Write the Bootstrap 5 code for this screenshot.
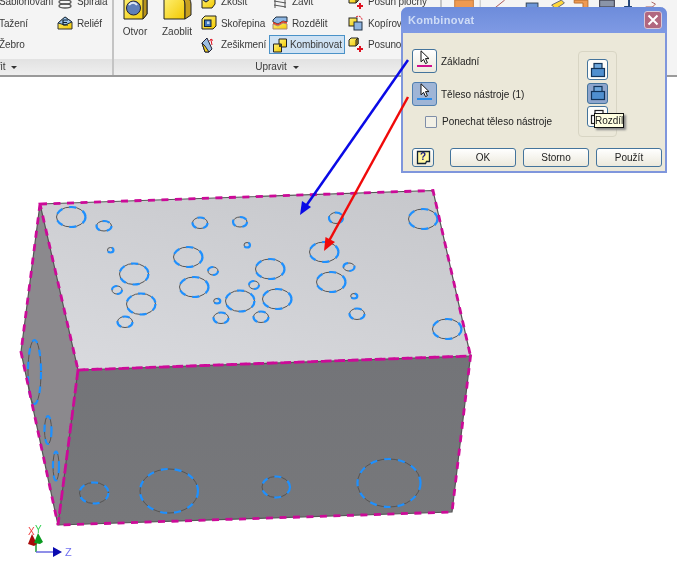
<!DOCTYPE html>
<html lang="cs">
<head>
  <meta charset="UTF-8">
  <meta name="viewport" content="width=device-width, initial-scale=1.0">
  <title>Kombinovat</title>
  <link href="https://cdn.jsdelivr.net/npm/bootstrap@5.3.0/dist/css/bootstrap.min.css" rel="stylesheet">
  <style>
    body {
      width: 677px;
      height: 566px;
      overflow: hidden;
      background: #fff;
      position: relative;
      font-family: "Liberation Sans", Arial, sans-serif;
      font-size: 10px;
      color: #3a3a3a;
    }
    /* ribbon */
    .ribbon {
      height: 77px;
      overflow: hidden;
      border-bottom: 2px solid #9a9a9a;
      background: #f4f4f4;
      filter: blur(.45px);
    }
    .rb-group { height: 75px; flex: none; border-right: 2px solid #c4c4c4; }
    .rb-body { height: 59px; }
    .rb-label {
      height: 16px;
      line-height: 15px;
      text-align: center;
      background: linear-gradient(#e2e2e2, #efefef);
    }
    .rb-caret {
      display: inline-block;
      margin-left: 6px;
      border: 3.5px solid transparent;
      border-top-color: #333;
      border-bottom: 0;
      vertical-align: 1px;
    }
    .rb-col { margin-top: -9px; }
    .rb-item { height: 21.5px; white-space: nowrap; gap: 4px; letter-spacing: -.1px; }
    .rb-pad { padding-left: 3px; }
    .rb-on {
      height: 19px;
      margin-top: 1px;
      background: #cfe2f3;
      border: 1px solid #4a92c8;
      padding-left: 2px;
      gap: 2px;
    }
    .rb-big { width: 42px; margin-top: -6px; gap: 3px; }
    .rb-gap { margin-left: 3px; }
    /* dialog */
    .dlg {
      position: absolute;
      left: 401px;
      top: 7px;
      width: 266px;
      height: 166px;
      border: 2px solid #7f96dc;
      border-top: 0;
      border-radius: 7px 7px 0 0;
      background: #ebe8d9;
      color: #222;
      filter: blur(.45px);
    }
    .dlg-title {
      flex: none;
      height: 26px;
      margin: 0 -2px;
      padding: 0 5px 0 7px;
      border-radius: 7px 7px 0 0;
      background: linear-gradient(#6d8cdb, #7f9ae4);
      color: #cfdcf6;
      font-size: 11px;
      font-weight: 700;
      letter-spacing: .3px;
    }
    .dlg-close {
      width: 18px;
      height: 18px;
      border: 1px solid #d8c8d8;
      border-radius: 3px;
      background: #b1677f;
    }
    .dlg-pick {
      width: 25px;
      height: 24px;
      padding: 0;
      border: 1.5px solid #44749c;
      border-radius: 3px;
      background: linear-gradient(#fff, #ece9dc);
    }
    .dlg-pick.is-on { background: #9fb5d6; border-color: #4f7fb0; }
    .dlg-check {
      width: 12px;
      height: 12px;
      border: 1px solid #7f8ea8;
      border-radius: 1px;
      background: #f2f0e6;
      flex: none;
    }
    .dlg-ops {
      width: 39px;
      height: 86px;
      margin: 2px 48px 0 0;
      padding-top: 7px;
      gap: 2.5px;
      border: 1px solid #d8d5c4;
      border-radius: 4px;
    }
    .dlg-op {
      width: 21px;
      height: 21px;
      padding: 0;
      border: 1.5px solid #44749c;
      border-radius: 3px;
      background: #fdfdfa;
    }
    .dlg-op.is-on { background: #8ea6cd; }
    .dlg-foot { margin: 11px 0 0 9px; gap: 7px; }
    .dlg-btn {
      width: 66px;
      height: 19px;
      padding: 0;
      border: 1.5px solid #44749c;
      border-radius: 3px;
      background: linear-gradient(#fff, #ece9dc);
      color: #222;
      font-size: 10px;
      line-height: 15px;
    }
    .dlg-help { width: 22px; margin-right: 9px; }
    .dlg-tip {
      position: absolute;
      left: 191px;
      top: 106px;
      width: 30px;
      height: 15px;
      border: 1px solid #111;
      background: #ffffe1;
      box-shadow: 2px 2px 2px #888;
      font-size: 10px;
      line-height: 13px;
      text-align: center;
      white-space: nowrap;
    }
    /* model */
    .scene { display: block; filter: blur(.4px); }
    .arrows { position: absolute; left: 0; top: 0; pointer-events: none; filter: blur(.4px); }
  </style>
</head>
<body>

  <svg width="0" height="0" class="position-absolute">
    <defs>
      <linearGradient id="yel" x1="0" y1="0" x2="1" y2="1">
        <stop offset="0" stop-color="#fff27a"/>
        <stop offset="1" stop-color="#f2c800"/>
      </linearGradient>
      <symbol id="ic-move" viewBox="0 0 16 16">
        <path d="M1 3 3 1h7v6l-2 2H1z" fill="url(#yel)" stroke="#222"/>
        <path d="M8 3l2-2v6l-2 2z" fill="#c09a20" stroke="#222"/>
        <path d="M12 9v6M9 12h6" stroke="#e01020" stroke-width="2"/>
      </symbol>
      <symbol id="ic-op" viewBox="0 0 18 18">
        <rect x="5" y="2.500" width="8" height="8" fill="#6fa8dc" stroke="#12345a" stroke-width="1.200"/>
        <rect x="2.500" y="7.500" width="13" height="8" fill="#4f8fcf" stroke="#12345a" stroke-width="1.200"/>
      </symbol>
      <symbol id="ic-cursor" viewBox="0 0 10 15">
        <path d="M1 .8v11l2.600-2.400 1.900 4.200 1.900-.9-1.900-4.100H9z" fill="#fff" stroke="#111"/>
      </symbol>
    </defs>
  </svg>

  <!-- ribbon -->
  <div class="ribbon d-flex">
    <div class="rb-group d-flex flex-column" style="width:236px;margin-left:-122px">
      <div class="rb-body d-flex justify-content-end">
        <div class="rb-col" style="width:58px">
          <div class="rb-item d-flex align-items-center">Šablonování</div>
          <div class="rb-item d-flex align-items-center">Tažení</div>
          <div class="rb-item d-flex align-items-center">Žebro</div>
        </div>
        <div class="rb-col" style="width:55px">
          <div class="rb-item d-flex align-items-center">
            <svg width="16" height="16" viewBox="0 0 16 16" fill="none" stroke="#555" stroke-width="1.300"><ellipse cx="8" cy="4" rx="6" ry="2"/><ellipse cx="8" cy="8" rx="6" ry="2"/><ellipse cx="8" cy="12" rx="6" ry="2"/></svg>Spirála
          </div>
          <div class="rb-item d-flex align-items-center">
            <svg width="16" height="16" viewBox="0 0 16 16"><path d="M1 8 8 2l7 5v7H1z" fill="url(#yel)" stroke="#333"/><path d="M1 8 8 2l7 5-7 3z" fill="#9cc4ea" stroke="#234"/><path d="M6 5h5M6 7.500h4M6 10h5M6 5v5" stroke="#123" stroke-width="1.200" fill="none"/></svg>Reliéf
          </div>
        </div>
      </div>
      <div class="rb-label">Vytvořit<span class="rb-caret"></span></div>
    </div>

    <div class="rb-group d-flex flex-column" style="width:328px">
      <div class="rb-body d-flex">
        <div class="rb-big d-flex flex-column align-items-center">
          <svg width="27" height="27" viewBox="0 0 27 27"><path d="M2 6 6 1h19v19l-4 5H2z" fill="url(#yel)" stroke="#222"/><path d="M21 6l4-5v19l-4 5z" fill="#b8941c" stroke="#222"/><circle cx="11.500" cy="14" r="7" fill="#5f7fb8" stroke="#223"/><path d="M7 11c2-3 6-3 8 0" stroke="#dfe8f5" stroke-width="2" fill="none"/></svg>
          <span>Otvor</span>
        </div>
        <div class="rb-big d-flex flex-column align-items-center">
          <svg width="29" height="27" viewBox="0 0 29 27"><path d="M1 25V2h12c7 0 9 4 9 9v14z" fill="url(#yel)" stroke="#222"/><path d="M22 25V11c0-3-1-6-3-8l4-2c3 2 5 6 5 9v11z" fill="#c8a020" stroke="#222"/></svg>
          <span>Zaoblit</span>
        </div>
        <div class="rb-col rb-gap" style="width:68px">
          <div class="rb-item d-flex align-items-center"><svg width="16" height="16" viewBox="0 0 16 16"><path d="M1 5l4 3 9-7v9l-3 4H1z" fill="url(#yel)" stroke="#222"/><path d="M1 5l4-4h9L5 8z" fill="#7faadd" stroke="#222"/></svg>Zkosit</div>
          <div class="rb-item d-flex align-items-center"><svg width="16" height="16" viewBox="0 0 16 16"><path d="M1 4 4 1h11v10l-3 3H1z" fill="url(#yel)" stroke="#222"/><rect x="3.500" y="5" width="6.500" height="6.500" fill="#3f78c0" stroke="#123"/><rect x="6" y="6.500" width="2.500" height="2.500" fill="#bcd6f2"/></svg>Skořepina</div>
          <div class="rb-item d-flex align-items-center"><svg width="16" height="16" viewBox="0 0 16 16"><path d="M1 6 6 1l5 11-3 3H4z" fill="#9cbde2" stroke="#223"/><path d="M4 15 1 6l3 3 4 6z" fill="#f2d020" stroke="#223"/><path d="M11 8 10 3M8.500 4 10 2l2 1.500" stroke="#e01020" fill="none"/></svg>Zešikmení</div>
        </div>
        <div class="rb-col" style="width:76px">
          <div class="rb-item rb-pad d-flex align-items-center"><svg width="16" height="16" viewBox="0 0 16 16" fill="none" stroke="#555"><path d="M2 3l12 2M2 7l12 2M2 11l12 2M3 2v12M13 2v12"/></svg>Závit</div>
          <div class="rb-item rb-pad d-flex align-items-center"><svg width="16" height="16" viewBox="0 0 16 16"><path d="M1 5l3-3h11v5L11 6 6 9 1 7z" fill="#8fb8e4" stroke="#234"/><path d="M1 7l5 2 5-3 4 1v2l-4-1-5 3-5-2z" fill="#e8402a"/><path d="M1 9l5 2 5-3 4 1v5H1z" fill="url(#yel)" stroke="#a87"/></svg>Rozdělit</div>
          <div class="rb-item rb-on d-flex align-items-center"><svg width="16" height="16" viewBox="0 0 16 16"><path d="M7 2h7.500v8H7z" fill="url(#yel)" stroke="#222"/><path d="M1.500 7h8v8h-8z" fill="url(#yel)" stroke="#222"/><path d="M7 7h2.500v3H7z" fill="#443"/></svg>Kombinovat</div>
        </div>
        <div class="rb-col rb-gap">
          <div class="rb-item d-flex align-items-center"><svg width="16" height="16"><use href="#ic-move"/></svg>Posun plochy</div>
          <div class="rb-item d-flex align-items-center"><svg width="16" height="16" viewBox="0 0 16 16"><rect x="1" y="3" width="8" height="8" fill="url(#yel)" stroke="#222"/><rect x="6" y="7" width="8" height="8" fill="#8fb4e0" stroke="#234"/><path d="M8 2c3-2 6 0 6 3" fill="none" stroke="#e01020" stroke-dasharray="2 1"/></svg>Kopírovat</div>
          <div class="rb-item d-flex align-items-center"><svg width="16" height="16"><use href="#ic-move"/></svg>Posunout</div>
        </div>
      </div>
      <div class="rb-label">Upravit<span class="rb-caret"></span></div>
    </div>

    <!-- next group, only its bottom edge shows above the dialog -->
    <svg width="240" height="9" viewBox="441 0 240 9" class="flex-none">
      <rect x="454" y="0" width="19" height="9" fill="#ef9a52" stroke="#c77a3a"/>
      <path d="M480 0v9" stroke="#bbb"/>
      <path d="M495 8l10-8M497 8h8" stroke="#a55" fill="none"/>
      <rect x="527" y="3" width="12" height="6" fill="#6c96d8" stroke="#345"/>
      <path d="M553 5l10-5 3 3-9 6z" fill="#ffd83a" stroke="#667"/>
      <path d="M576 0h14v8h-5V3h-9z" fill="#ef9a52" stroke="#b97030"/>
      <rect x="602" y="0" width="15" height="7" fill="#8a94a8" stroke="#334"/>
      <path d="M627 7h8M632 0v7" stroke="#247" stroke-width="2"/>
      <path d="M649 7h8M655 2l4 2-3 3" stroke="#a66" fill="none"/>
    </svg>
  </div>

  <!-- model view -->
  <svg class="scene" width="677" height="489" viewBox="0 77 677 489">
    <defs>
      <linearGradient id="topFace" x1=".8" y1="0" x2=".2" y2="1">
        <stop offset="0" stop-color="#c7c8cc"/>
        <stop offset="1" stop-color="#d8d9dd"/>
      </linearGradient>
      <linearGradient id="frontFace" x1="0" y1="0" x2="0" y2="1">
        <stop offset="0" stop-color="#737478"/>
        <stop offset="1" stop-color="#77787b"/>
      </linearGradient>
      <g id="holes">
        <ellipse cx="71" cy="217" rx="14.500" ry="10"/>
        <ellipse cx="104" cy="226" rx="7.500" ry="5"/>
        <ellipse cx="110.500" cy="250" rx="3" ry="2.500"/>
        <ellipse cx="200" cy="223" rx="7.500" ry="5.500"/>
        <ellipse cx="240" cy="222" rx="7" ry="5"/>
        <ellipse cx="336" cy="218" rx="7" ry="5.500"/>
        <ellipse cx="423" cy="219" rx="14.500" ry="10"/>
        <ellipse cx="188" cy="257" rx="14.500" ry="10"/>
        <ellipse cx="134" cy="274" rx="14.500" ry="10.500"/>
        <ellipse cx="213" cy="271" rx="5" ry="4"/>
        <ellipse cx="117" cy="290" rx="5" ry="4"/>
        <ellipse cx="194" cy="287" rx="14.500" ry="10"/>
        <ellipse cx="141" cy="304" rx="14.500" ry="10.500"/>
        <ellipse cx="217" cy="301" rx="3.300" ry="2.500"/>
        <ellipse cx="125" cy="322" rx="7.500" ry="5.500"/>
        <ellipse cx="221" cy="318" rx="7.500" ry="5.500"/>
        <ellipse cx="240" cy="301" rx="14.500" ry="10.500"/>
        <ellipse cx="247" cy="245" rx="3" ry="2.500"/>
        <ellipse cx="324" cy="252" rx="14.500" ry="10"/>
        <ellipse cx="270" cy="269" rx="14.500" ry="10"/>
        <ellipse cx="349" cy="267" rx="5.500" ry="4"/>
        <ellipse cx="254" cy="285" rx="5" ry="4"/>
        <ellipse cx="331" cy="282" rx="14.500" ry="10"/>
        <ellipse cx="277" cy="299" rx="14.500" ry="10"/>
        <ellipse cx="354" cy="296" rx="3.300" ry="2.500"/>
        <ellipse cx="261" cy="317" rx="7.500" ry="5.500"/>
        <ellipse cx="357" cy="314" rx="7.500" ry="5.500"/>
        <ellipse cx="447" cy="329" rx="14.500" ry="10"/>
        <ellipse cx="34.500" cy="372" rx="6.500" ry="32"/>
        <ellipse cx="48" cy="430" rx="3.500" ry="14"/>
        <ellipse cx="56" cy="466" rx="3" ry="14.500"/>
        <ellipse cx="94" cy="493" rx="14.500" ry="10.500"/>
        <ellipse cx="169" cy="491" rx="29" ry="22"/>
        <ellipse cx="276" cy="487" rx="14" ry="10.500"/>
        <ellipse cx="389" cy="483" rx="31.500" ry="24"/>
      </g>
      <g id="edges">
        <path d="M40 204 433 190.500 470.500 356 78 370zM78 370 470.500 356 452 512 58 525zM40 204 21 352 58 525 78 370"/>
      </g>
    </defs>
    <path d="M40 204 433 190.500 470.500 356 78 370z" fill="url(#topFace)"/>
    <path d="M40 204 78 370 58 525 21 352z" fill="#8b898d"/>
    <path d="M78 370 470.500 356 452 512 58 525z" fill="url(#frontFace)"/>
    <use href="#holes" fill="none" stroke="#555" stroke-width="1"/>
    <use href="#holes" fill="none" stroke="#1e90ff" stroke-width="2.200" stroke-dasharray="7 7"/>
    <use href="#edges" fill="none" stroke="#555" stroke-width="1.200"/>
    <use href="#edges" fill="none" stroke="#cc0a98" stroke-width="2.800" stroke-dasharray="7 6.500"/>

    <!-- axis triad -->
    <path d="M36 543v9" stroke="#1a9a30" stroke-width="1.500"/>
    <path d="M36 552h20" stroke="#6a6ae0" stroke-width="1.500"/>
    <path d="M53 547l9 5-9 5z" fill="#0a0ab0"/>
    <path d="M32 534l5 10-3 2-6-2z" fill="#a80a0a"/>
    <path d="M38 533l5 9-3 2-6-1z" fill="#0a9a20"/>
    <text x="28" y="535" font-size="10" font-family="Liberation Sans" fill="#f04040">X</text>
    <text x="35" y="533" font-size="10" font-family="Liberation Sans" fill="#30d050">Y</text>
    <text x="65" y="556" font-size="11" font-family="Liberation Sans" fill="#7070f0">Z</text>
  </svg>

  <!-- Kombinovat dialog -->
  <div class="dlg d-flex flex-column">
    <div class="dlg-title d-flex align-items-center justify-content-between">
      <span>Kombinovat</span>
      <span class="dlg-close d-flex align-items-center justify-content-center">
        <svg width="12" height="12" viewBox="0 0 12 12"><path d="M1.500 1.500l9 9M10.500 1.500l-9 9" stroke="#fff" stroke-width="2"/></svg>
      </span>
    </div>
    <div class="d-flex justify-content-between" style="margin-top:16px">
      <div style="margin-left:9px">
        <div class="d-flex align-items-center gap-1">
          <button class="dlg-pick d-flex flex-column align-items-center" type="button">
            <svg width="10" height="15"><use href="#ic-cursor"/></svg>
            <svg width="15" height="2"><rect width="15" height="2" fill="#d0108f"/></svg>
          </button>
          <span>Základní</span>
        </div>
        <div class="d-flex align-items-center gap-1" style="margin-top:9px">
          <button class="dlg-pick is-on d-flex flex-column align-items-center" type="button">
            <svg width="10" height="15"><use href="#ic-cursor"/></svg>
            <svg width="15" height="2"><rect width="15" height="2" fill="#2b8ce8"/></svg>
          </button>
          <span>Těleso nástroje (1)</span>
        </div>
        <div class="d-flex align-items-center" style="margin:8px 0 0 13px;gap:5px">
          <span class="dlg-check"></span>
          <span>Ponechat těleso nástroje</span>
        </div>
      </div>
      <div class="dlg-ops d-flex flex-column align-items-center">
        <button class="dlg-op" type="button"><svg width="18" height="18"><use href="#ic-op"/></svg></button>
        <button class="dlg-op is-on" type="button"><svg width="18" height="18"><use href="#ic-op"/></svg></button>
        <button class="dlg-op" type="button">
          <svg width="18" height="18" viewBox="0 0 18 18" fill="#fff" stroke="#222" stroke-width="1.200"><rect x="6" y="2.500" width="8" height="8"/><rect x="2.500" y="7.500" width="8" height="8"/></svg>
        </button>
      </div>
    </div>
    <div class="dlg-foot d-flex">
      <button class="dlg-btn dlg-help" type="button">
        <svg width="15" height="15" viewBox="0 0 15 15"><path d="M1.500 1.500h12v10h-3l-1 2h-8z" fill="#fff6a0" stroke="#123" stroke-width="1.300"/><text x="7" y="10" text-anchor="middle" font-size="10" font-weight="700" font-family="Liberation Sans" fill="#1a1a80">?</text></svg>
      </button>
      <button class="dlg-btn" type="button">OK</button>
      <button class="dlg-btn" type="button">Storno</button>
      <button class="dlg-btn" type="button">Použít</button>
    </div>
    <div class="dlg-tip">Rozdíl</div>
  </div>

  <!-- arrows run over the dialog edge and the model -->
  <svg class="arrows" width="677" height="566" viewBox="0 0 677 566">
    <path d="M408 60 306 206" stroke="#0a0ae6" stroke-width="2.500"/>
    <path d="M300 215l2-14 9 6z" fill="#0a0ae6"/>
    <path d="M408 97 329 241" stroke="#f00a0a" stroke-width="2.500"/>
    <path d="M324 251l1.500-14 9.500 5z" fill="#f00a0a"/>
  </svg>

  <script src="https://cdn.jsdelivr.net/npm/bootstrap@5.3.0/dist/js/bootstrap.bundle.min.js"></script>
</body>
</html>
